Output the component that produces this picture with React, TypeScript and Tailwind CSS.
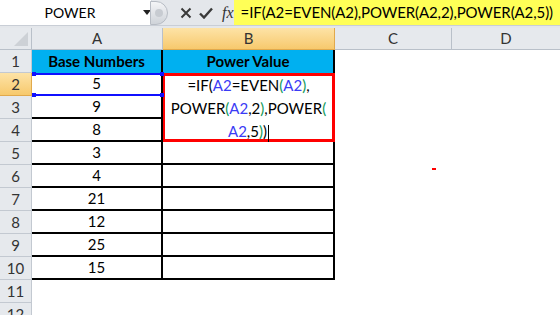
import React from 'react';

const values = [5, 9, 8, 3, 4, 21, 12, 25, 15];

const Blue = ({ children }: { children: React.ReactNode }) => <span className="text-[#3b3bf5]">{children}</span>;
const Green = ({ children }: { children: React.ReactNode }) => <span className="text-[#119a5a]">{children}</span>;

export default function App() {
  return (
    <div className="relative w-[560px] h-[315px] overflow-hidden bg-white font-['Lato','Liberation_Sans',sans-serif] text-[15px] text-black">
      {/* formula bar */}
      <div className="h-[26px] flex bg-[#e4e7eb] border-b border-[#c9ced6]">
        <div className="w-[158px] bg-white flex items-center border-r border-[#d5d9df]">
          <span className="w-[140px] text-center text-[14px]">POWER</span>
          <svg width="8" height="5" viewBox="0 0 8 5" className="ml-[3px]">
            <path d="M0 0h8L4 5z" fill="#222" />
          </svg>
        </div>
        <div className="w-[85px] flex items-center">
          <div className="w-[18px] h-[24px] -ml-[2px] rounded-r-full bg-gradient-to-b from-[#f4f5f7] to-[#cfd3d9] border border-[#b7bcc4] flex items-center justify-center">
            <div className="w-[8px] h-[8px] rounded-full bg-[#c7cbd1]" />
          </div>
          <svg width="12" height="12" viewBox="0 0 12 12" className="ml-[12px]">
            <path d="M1.5 1.5l9 9M10.5 1.5l-9 9" stroke="#3a3a3a" strokeWidth="2" />
          </svg>
          <svg width="14" height="12" viewBox="0 0 14 12" className="ml-[7px]">
            <path d="M1 6.5l4 4L13 1.5" stroke="#3a3a3a" strokeWidth="2.4" fill="none" />
          </svg>
          <span className="ml-[9px] font-['Liberation_Serif',serif] italic text-[16px] text-[#333] leading-none">fx</span>
        </div>
        <div className="flex-1 bg-white flex">
          <span className="bg-[#ffff57] h-full flex items-center pl-[7px] pr-[11px] text-[15px] tracking-[-0.1px]">
            =IF(A2=EVEN(A2),POWER(A2,2),POWER(A2,5))
          </span>
        </div>
      </div>
      <div className="h-[2px] bg-[#e4e7eb]" />

      {/* sheet */}
      <div className="grid grid-cols-[32px_131px_172px_117px_108px] grid-rows-[22px_repeat(12,23px)]">
        {/* column headers */}
        <div className="relative bg-[#e6e9ed] border-r border-b border-[#b9c0c9]">
          <svg width="14" height="14" viewBox="0 0 14 14" className="absolute right-[3px] bottom-[3px]">
            <path d="M14 0v14H0z" fill="#cdd1d6" />
          </svg>
        </div>
        <div className="bg-[#e6e9ed] border-r border-b border-[#b9c0c9] flex items-center justify-center text-[#333]">A</div>
        <div className="bg-gradient-to-b from-[#fde3a6] to-[#f7c96c] border-r border-b border-[#e1a94c] flex items-center justify-center text-[#333]">B</div>
        <div className="bg-[#e6e9ed] border-r border-b border-[#b9c0c9] flex items-center justify-center text-[#333]">C</div>
        <div className="bg-[#e6e9ed] border-b border-[#b9c0c9] flex items-center justify-center text-[#333]">D</div>

        {/* row 1 */}
        <div className="bg-[#e6e9ed] border-r border-b border-[#c3c9d1] flex items-center justify-center text-[#333]">1</div>
        <div className="bg-[#00b0f0] border-r-2 border-black flex items-center justify-center font-bold">Base Numbers</div>
        <div className="bg-[#00b0f0] border-r-2 border-black flex items-center justify-center font-bold">Power Value</div>
        <div />
        <div />

        {/* row 2 */}
        <div className="bg-gradient-to-b from-[#fde3a6] to-[#f7c96c] border-r border-b border-[#e1a94c] flex items-center justify-center text-[#333]">2</div>
        <div className="relative border-r-2 border-b-2 border-black flex items-center justify-center">
          5
          <div className="absolute left-0 -right-[2px] top-0 -bottom-[2px] border-y-2 border-[#1010ff]" />
          <div className="absolute left-0 -top-[1px] w-[4px] h-[4px] bg-[#1010ff]" />
          <div className="absolute -right-[3px] -top-[1px] w-[4px] h-[4px] bg-[#1010ff]" />
          <div className="absolute left-0 -bottom-[3px] w-[4px] h-[4px] bg-[#1010ff]" />
          <div className="absolute -right-[3px] -bottom-[3px] w-[4px] h-[4px] bg-[#1010ff]" />
        </div>
        <div className="row-span-3 -ml-[1px] border-[3px] border-[#ff0000] bg-white text-center leading-[23px] text-[15px]">
          <div className="-mt-[2px]">
            =IF(<Blue>A2</Blue>=EVEN<Green>(</Green><Blue>A2</Blue><Green>)</Green>,
          </div>
          <div>
            POWER<Green>(</Green><Blue>A2</Blue>,2<Green>)</Green>,POWER<Green>(</Green>
          </div>
          <div>
            <Blue>A2</Blue>,5<Green>)</Green>)<span className="inline-block w-px h-[17px] bg-black align-middle ml-[1px]" />
          </div>
        </div>
        <div />
        <div />

        {/* rows 3-10 */}
        {values.slice(1).map((v, i) => (
          <React.Fragment key={i}>
            <div className="bg-[#e6e9ed] border-r border-b border-[#c3c9d1] flex items-center justify-center text-[#333]">{i + 3}</div>
            <div className="border-r-2 border-b-2 border-black flex items-center justify-center">{v}</div>
            {i >= 2 && <div className="border-r-2 border-b-2 border-black" />}
            <div />
            <div />
          </React.Fragment>
        ))}

        {/* rows 11-12 */}
        {[11, 12].map((n) => (
          <React.Fragment key={n}>
            <div className="bg-[#e6e9ed] border-r border-b border-[#c3c9d1] flex items-center justify-center text-[#333]">{n}</div>
            <div />
            <div />
            <div />
            <div />
          </React.Fragment>
        ))}
      </div>

      {/* stray red mark */}
      <div className="absolute left-[432px] top-[168px] w-[4px] h-[2px] bg-[#ff0000]" />
    </div>
  );
}
